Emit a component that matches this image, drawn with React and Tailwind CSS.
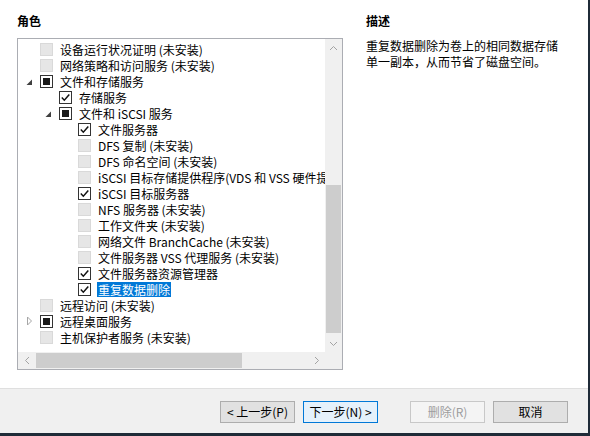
const rows = [
  { level: 0, state: 'disabled', text: '设备运行状况证明 (未安装)' },
  { level: 0, state: 'disabled', text: '网络策略和访问服务 (未安装)' },
  { level: 0, state: 'partial', expander: 'open', text: '文件和存储服务' },
  { level: 1, state: 'checked', text: '存储服务' },
  { level: 1, state: 'partial', expander: 'open', text: '文件和 iSCSI 服务' },
  { level: 2, state: 'checked', text: '文件服务器' },
  { level: 2, state: 'disabled', text: 'DFS 复制 (未安装)' },
  { level: 2, state: 'disabled', text: 'DFS 命名空间 (未安装)' },
  { level: 2, state: 'disabled', text: 'iSCSI 目标存储提供程序(VDS 和 VSS 硬件提供程序) (未安装)' },
  { level: 2, state: 'checked', text: 'iSCSI 目标服务器' },
  { level: 2, state: 'disabled', text: 'NFS 服务器 (未安装)' },
  { level: 2, state: 'disabled', text: '工作文件夹 (未安装)' },
  { level: 2, state: 'disabled', text: '网络文件 BranchCache (未安装)' },
  { level: 2, state: 'disabled', text: '文件服务器 VSS 代理服务 (未安装)' },
  { level: 2, state: 'checked', text: '文件服务器资源管理器' },
  { level: 2, state: 'checked', selected: true, text: '重复数据删除' },
  { level: 0, state: 'disabled', text: '远程访问 (未安装)' },
  { level: 0, state: 'partial', expander: 'closed', text: '远程桌面服务' },
  { level: 0, state: 'disabled', text: '主机保护者服务 (未安装)' },
];

const indent = ['pl-0', 'pl-[19px]', 'pl-[38px]'];

const Checkbox = ({ state }) => {
  if (state === 'disabled') {
    return <div className="w-[13px] h-[13px] shrink-0 bg-[#e6e6e6] border border-[#d9d9d9]" />;
  }
  return (
    <div className="w-[13px] h-[13px] shrink-0 bg-white border border-[#333] flex items-center justify-center">
      {state === 'partial' && <div className="w-[7px] h-[7px] bg-[#1a1a1a]" />}
      {state === 'checked' && (
        <svg width="11" height="11" viewBox="0 0 11 11">
          <path d="M1.8 5.6 L4.3 8.2 L9.3 2.4" fill="none" stroke="#111" strokeWidth="1.5" />
        </svg>
      )}
    </div>
  );
};

const Expander = ({ type }) => (
  <div className="w-[22px] h-4 shrink-0 flex items-center justify-center">
    {type === 'open' && (
      <svg width="7" height="7" viewBox="0 0 7 7" className="mt-[2px]">
        <polygon points="6,0.5 6,6 0.5,6" fill="#404040" />
      </svg>
    )}
    {type === 'closed' && (
      <svg width="7" height="10" viewBox="0 0 7 10">
        <polygon points="1.5,1 5.5,5 1.5,9" fill="none" stroke="#a6a6a6" strokeWidth="1" />
      </svg>
    )}
  </div>
);

const Chevron = ({ dir }) => {
  const d = {
    up: 'M1 5 L4.5 1.5 L8 5',
    down: 'M1 1 L4.5 4.5 L8 1',
    left: 'M5 1 L1.5 4.5 L5 8',
    right: 'M1 1 L4.5 4.5 L1 8',
  }[dir];
  const vertical = dir === 'up' || dir === 'down';
  return (
    <div className="w-[17px] h-[17px] shrink-0 flex items-center justify-center">
      <svg width={vertical ? 9 : 6} height={vertical ? 6 : 9} viewBox={vertical ? '0 0 9 6' : '0 0 6 9'}>
        <path d={d} fill="none" stroke="#a3a3a3" strokeWidth="1" />
      </svg>
    </div>
  );
};

const Button = ({ children, variant }) => {
  const styles = {
    normal: 'bg-[#e1e1e1] border-[#adadad] text-black',
    default: 'bg-[#e5f1fb] border-[#0078d7] text-black',
    disabled: 'bg-[#f4f4f4] border-[#c8c8c8] text-[#9d9d9d]',
  }[variant];
  return (
    <div className={`w-[75px] h-[22px] border flex items-center justify-center text-[12px] ${styles}`}>
      {children}
    </div>
  );
};

export default function App() {
  return (
    <div
      className="w-[590px] h-[436px] flex flex-col bg-white border-r-2 border-b-[3px] border-[#1f2b38] text-black text-[12px]"
      style={{ fontFamily: '"Noto Sans CJK SC", "Noto Sans", sans-serif' }}
    >
      <div className="flex-1 flex bg-white">
        <div className="w-[343px] pl-[17px] pt-[13px] flex flex-col">
          <div className="font-bold leading-4 h-4">角色</div>
          <div className="mt-[9px] w-[326px] h-[332px] border border-[#abadb3] grid grid-cols-[307px_17px] grid-rows-[313px_17px]">
            <div className="overflow-hidden pt-[2px]">
              {rows.map((r, i) => (
                <div key={i} className={`h-4 flex items-center whitespace-nowrap ${indent[r.level]}`}>
                  <Expander type={r.expander} />
                  <Checkbox state={r.state} />
                  <span
                    className={`ml-[6px] px-[1px] h-[15px] leading-[15px] ${
                      r.selected ? 'bg-[#0078d7] text-white' : ''
                    }`}
                  >
                    {r.text}
                  </span>
                </div>
              ))}
            </div>
            <div className="bg-[#f0f0f0] flex flex-col">
              <Chevron dir="up" />
              <div className="flex-1 flex flex-col">
                <div className="h-[129px]" />
                <div className="h-[148px] mx-[1px] bg-[#cdcdcd]" />
              </div>
              <Chevron dir="down" />
            </div>
            <div className="bg-[#f0f0f0] flex">
              <Chevron dir="left" />
              <div className="flex-1 flex py-[1px]">
                <div className="w-[1px]" />
                <div className="w-[206px] bg-[#cdcdcd]" />
              </div>
              <Chevron dir="right" />
            </div>
            <div className="bg-[#f0f0f0]" />
          </div>
        </div>
        <div className="pl-[23px] pt-[13px] flex flex-col">
          <div className="font-bold leading-4 h-4">描述</div>
          <div className="mt-[9px] leading-4">
            重复数据删除为卷上的相同数据存储
            <br />
            单一副本，从而节省了磁盘空间。
          </div>
        </div>
      </div>
      <div className="h-[45px] bg-[#f0f0f0] border-t border-[#dfdfdf] flex justify-end pr-[20px] pt-[12px]">
        <Button variant="normal">&lt; 上一步(P)</Button>
        <div className="w-[8px]" />
        <Button variant="default">下一步(N) &gt;</Button>
        <div className="w-[32px]" />
        <Button variant="disabled">删除(R)</Button>
        <div className="w-[8px]" />
        <Button variant="normal">取消</Button>
      </div>
    </div>
  );
}
